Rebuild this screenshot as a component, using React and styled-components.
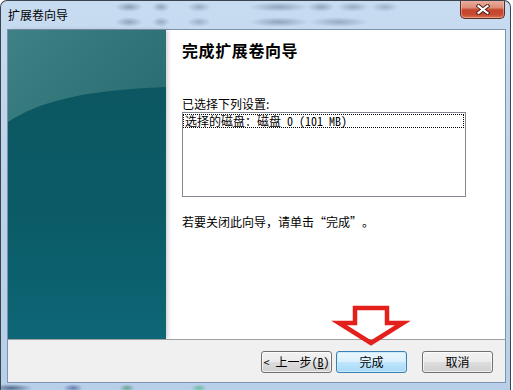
import React from "react";
import styled, { createGlobalStyle } from "styled-components";

const GlobalStyle = createGlobalStyle`
  html, body {
    margin: 0;
    padding: 0;
    background: #ffffff;
  }
  body {
    font-family: "Noto Sans CJK SC", "Noto Sans", sans-serif;
    font-size: 12px;
    color: #000;
  }
`;

const Window = styled.div`
  position: relative;
  box-sizing: border-box;
  width: 511px;
  height: 390px;
  border: 1px solid #3b434f;
  border-bottom: none;
  border-radius: 7px 7px 0 0;
  padding: 0 4px 7px 6px;
  display: flex;
  flex-direction: column;
  overflow: hidden;
  background:
    radial-gradient(ellipse 14px 5px at 128px 6px, rgba(80, 100, 130, 0.5), transparent),
    radial-gradient(ellipse 9px 5px at 160px 6px, rgba(80, 100, 130, 0.45), transparent),
    radial-gradient(ellipse 12px 5px at 198px 6px, rgba(80, 100, 130, 0.4), transparent),
    radial-gradient(ellipse 30px 5px at 278px 6px, rgba(80, 100, 130, 0.45), transparent),
    radial-gradient(ellipse 14px 5px at 320px 6px, rgba(80, 100, 130, 0.45), transparent),
    radial-gradient(ellipse 16px 5px at 352px 6px, rgba(80, 100, 130, 0.4), transparent),
    radial-gradient(ellipse 14px 5px at 384px 6px, rgba(80, 100, 130, 0.35), transparent),
    radial-gradient(ellipse 14px 5px at 128px 21px, rgba(80, 100, 130, 0.45), transparent),
    radial-gradient(ellipse 9px 5px at 160px 21px, rgba(80, 100, 130, 0.4), transparent),
    radial-gradient(ellipse 12px 5px at 198px 21px, rgba(80, 100, 130, 0.35), transparent),
    radial-gradient(ellipse 30px 5px at 278px 21px, rgba(80, 100, 130, 0.45), transparent),
    radial-gradient(ellipse 30px 5px at 338px 21px, rgba(80, 100, 130, 0.4), transparent),
    radial-gradient(ellipse 22px 4px at 10px 387px, rgba(20, 40, 80, 0.6), transparent),
    radial-gradient(ellipse 10px 4px at 72px 387px, rgba(30, 40, 110, 0.5), transparent),
    radial-gradient(ellipse 8px 4px at 126px 387px, rgba(30, 120, 70, 0.5), transparent),
    radial-gradient(ellipse 8px 4px at 198px 387px, rgba(40, 170, 90, 0.5), transparent),
    linear-gradient(180deg, #c8dcf1 0%, #bed4ec 40%, #b8cfe9 100%);
`;

const TitleBar = styled.div`
  height: 28px;
  flex: none;
  display: flex;
  justify-content: space-between;
  align-items: flex-start;
  padding-left: 1px;
`;

const TitleText = styled.div`
  margin-top: 6px;
  font-size: 12px;
  line-height: 15px;
  color: #000;
`;

const CloseButton = styled.div`
  box-sizing: border-box;
  width: 45px;
  height: 19px;
  margin-top: -1px;
  margin-right: 1px;
  border: 1px solid #5e2a22;
  border-top: none;
  border-radius: 0 0 5px 5px;
  display: flex;
  align-items: center;
  justify-content: center;
  background: linear-gradient(
    180deg,
    #eab2a3 0%,
    #dd8d78 42%,
    #c5462d 55%,
    #c6492f 80%,
    #d87352 100%
  );
  box-shadow: inset 0 0 0 1px rgba(255, 210, 200, 0.45);
`;

const Client = styled.div`
  flex: 1;
  display: flex;
  flex-direction: column;
  border: 1px solid #7e93ad;
  background: #ffffff;
`;

const Main = styled.div`
  height: 309px;
  flex: none;
  display: flex;
`;

const Sidebar = styled.div`
  width: 158px;
  flex: none;
  box-shadow: 2px 0 4px rgba(0, 0, 0, 0.18);

  svg {
    display: block;
  }
`;

const Content = styled.div`
  flex: 1;
  padding: 10px 0 0 16px;
  display: flex;
  flex-direction: column;
`;

const Heading = styled.div`
  font-size: 16px;
  line-height: 20px;
  font-weight: 700;
  letter-spacing: 0.6px;
`;

const Label = styled.div`
  margin-top: 36px;
  font-size: 12px;
  line-height: 15px;
`;

const ListBox = styled.div`
  box-sizing: border-box;
  margin-top: 1px;
  width: 284px;
  height: 85px;
  border: 1px solid #828790;
  padding-top: 1px;
`;

const ListRow = styled.div`
  box-sizing: border-box;
  height: 14px;
  width: 281px;
  border: 1px dotted #000;
  padding-left: 1px;
  font-size: 12px;
  line-height: 12px;
  white-space: nowrap;
  font-feature-settings: "hwid";
`;

const Note = styled.div`
  margin-top: 17px;
  font-size: 12px;
  line-height: 15px;
`;

const Quote = styled.span`
  display: inline-block;
  width: 12px;
  text-align: ${(p) => (p.$open ? "right" : "left")};
`;

const Separator = styled.div`
  height: 1px;
  flex: none;
  background: #a0a0a0;
`;

const Footer = styled.div`
  flex: 1;
  background: #f0f0f0;
  display: flex;
  justify-content: flex-end;
  align-items: flex-start;
  padding: 11px 12px 0 0;
`;

const Button = styled.div`
  box-sizing: border-box;
  width: 71px;
  height: 22px;
  margin-left: ${(p) => p.$gap}px;
  border: 1px solid ${(p) => (p.$primary ? "#3c7fb1" : "#707070")};
  border-radius: 3px;
  display: flex;
  align-items: center;
  justify-content: center;
  font-size: 12px;
  line-height: 14px;
  white-space: nowrap;
  font-feature-settings: "hwid";
  background: ${(p) =>
    p.$primary
      ? "linear-gradient(180deg, #eaf6fd 0%, #d9f0fc 50%, #bee6fd 51%, #a7d9f5 100%)"
      : "linear-gradient(180deg, #f2f2f2 0%, #ebebeb 50%, #dddddd 51%, #cfcfcf 100%)"};
  box-shadow: inset 0 0 0 1px
    ${(p) => (p.$primary ? "rgba(200, 235, 252, 0.9)" : "rgba(255, 255, 255, 0.7)")};
`;

const Arrow = styled.svg`
  position: absolute;
  left: 335px;
  top: 304px;
  overflow: visible;
`;

function SidebarArt() {
  return (
    <svg width="158" height="309" viewBox="0 0 158 309">
      <defs>
        <linearGradient id="sbTop" gradientUnits="userSpaceOnUse" x1="0" y1="0" x2="120" y2="100">
          <stop offset="0" stopColor="#3f8285" />
          <stop offset="1" stopColor="#2b6e73" />
        </linearGradient>
        <linearGradient id="sbDark" gradientUnits="userSpaceOnUse" x1="0" y1="60" x2="0" y2="309">
          <stop offset="0" stopColor="#0c5761" />
          <stop offset="0.55" stopColor="#0b5c68" />
          <stop offset="1" stopColor="#0e6676" />
        </linearGradient>
      </defs>
      <rect width="158" height="309" fill="url(#sbTop)" />
      <path d="M0 92 C 30 72, 75 60, 158 57 L158 309 L0 309 Z" fill="url(#sbDark)" />
    </svg>
  );
}

function CloseGlyph() {
  return (
    <svg width="14" height="11" viewBox="0 0 14 11">
      <path d="M2.5 2 L11.5 9 M11.5 2 L2.5 9" stroke="#4a1a14" strokeWidth="4" strokeLinecap="square" />
      <path d="M2.5 2 L11.5 9 M11.5 2 L2.5 9" stroke="#ffffff" strokeWidth="2.2" strokeLinecap="square" />
    </svg>
  );
}

export default function App() {
  return (
    <>
      <GlobalStyle />
      <Window>
        <TitleBar>
          <TitleText>扩展卷向导</TitleText>
          <CloseButton>
            <CloseGlyph />
          </CloseButton>
        </TitleBar>
        <Client>
          <Main>
            <Sidebar>
              <SidebarArt />
            </Sidebar>
            <Content>
              <Heading>完成扩展卷向导</Heading>
              <Label>已选择下列设置:</Label>
              <ListBox>
                <ListRow>选择的磁盘：磁盘 0 (101 MB)</ListRow>
              </ListBox>
              <Note>
                若要关闭此向导，请单击<Quote $open>“</Quote>完成<Quote>”</Quote>。
              </Note>
            </Content>
          </Main>
          <Separator />
          <Footer>
            <Button $gap={0}>
              &lt; 上一步(<u>B</u>)
            </Button>
            <Button $gap={4} $primary>
              完成
            </Button>
            <Button $gap={15}>取消</Button>
          </Footer>
        </Client>
        <Arrow width="72" height="42" viewBox="0 0 72 42">
          <path
            d="M19 3 L51 3 L51 18 L67 18 L35 38 L3 18 L19 18 Z"
            fill="none"
            stroke="#e3201b"
            strokeWidth="4.5"
            strokeLinejoin="miter"
          />
        </Arrow>
      </Window>
    </>
  );
}
